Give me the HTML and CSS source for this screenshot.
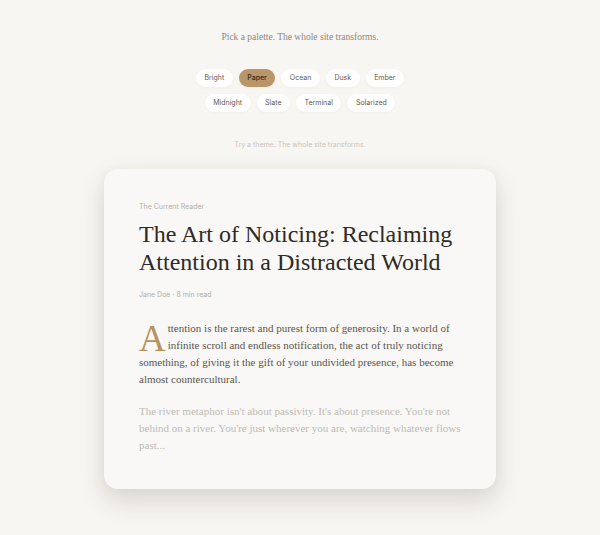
FILE: index.html
```html
<!DOCTYPE html>
<html lang="en">
<head>
<meta charset="utf-8">
<title>The Current Reader</title>
<link rel="stylesheet" href="styles.css">
</head>
<body>
<main class="page">
  <p class="tagline">Pick a palette. The whole site transforms.</p>
  <div class="pills">
    <div class="pill-row">
      <button class="pill">Bright</button>
      <button class="pill active">Paper</button>
      <button class="pill">Ocean</button>
      <button class="pill">Dusk</button>
      <button class="pill">Ember</button>
    </div>
    <div class="pill-row">
      <button class="pill">Midnight</button>
      <button class="pill">Slate</button>
      <button class="pill">Terminal</button>
      <button class="pill">Solarized</button>
    </div>
  </div>
  <p class="hint">Try a theme. The whole site transforms.</p>
  <article class="card">
    <div class="kicker">The Current Reader</div>
    <h1 class="title">The Art of Noticing: Reclaiming Attention in a Distracted World</h1>
    <div class="meta">Jane Doe · 8 min read</div>
    <p class="lead"><span class="dropcap">A</span>ttention is the rarest and purest form of generosity. In a world of infinite scroll and endless notification, the act of truly noticing something, of giving it the gift of your undivided presence, has become almost countercultural.</p>
    <p class="faded">The river metaphor isn't about passivity. It's about presence. You're not behind on a river. You're just wherever you are, watching whatever flows past...</p>
  </article>
</main>
</body>
</html>
```

FILE: styles.css
```css
html, body {
  margin: 0;
  padding: 0;
  background: #f8f6f2;
}
.page {
  display: flex;
  flex-direction: column;
  align-items: center;
  padding-top: 30px;
  padding-bottom: 40px;
}
.tagline {
  margin: 0;
  font-family: "Liberation Serif", serif;
  font-size: 9.5px;
  line-height: 14px;
  color: #8c8781;
}
.pills {
  margin-top: 25px;
  display: flex;
  flex-direction: column;
  gap: 7px;
  align-items: center;
}
.pill-row {
  display: flex;
  gap: 6px;
}
.pill {
  font-family: Inter, "Liberation Sans", sans-serif;
  font-size: 7px;
  line-height: 18px;
  height: 18px;
  padding: 0 8.5px;
  border: none;
  border-radius: 9px;
  background: #ffffff;
  color: #5f5a54;
  box-shadow: 0 1px 3px rgba(120, 100, 70, 0.05);
}
.pill.active {
  background: #b8966a;
  color: #33291c;
  font-weight: 500;
}
.hint {
  margin: 27px 0 0;
  font-family: Inter, "Liberation Sans", sans-serif;
  font-size: 7px;
  line-height: 12px;
  color: #c9c5bf;
}
.card {
  margin-top: 18px;
  width: 392px;
  box-sizing: border-box;
  padding: 33px 35px 35px;
  background: #f9f8f6;
  border-radius: 14px;
  box-shadow: 0 12px 26px rgba(60, 50, 35, 0.16), 0 0 10px rgba(60, 50, 35, 0.05);
}
.kicker {
  font-family: Inter, "Liberation Sans", sans-serif;
  font-size: 7px;
  line-height: 10px;
  color: #b3aea7;
}
.title {
  margin: 8px 0 0;
  font-family: "Liberation Serif", serif;
  font-weight: 400;
  font-size: 24px;
  line-height: 28px;
  color: #2e2b27;
}
.meta {
  margin-top: 14px;
  font-family: Inter, "Liberation Sans", sans-serif;
  font-size: 7px;
  line-height: 10px;
  color: #b3aea7;
}
.lead, .faded {
  font-family: "Liberation Serif", serif;
  font-size: 11px;
  line-height: 17px;
  margin: 20px 0 0;
  color: #5a554f;
}
.faded {
  margin-top: 15px;
  color: #c0bbb4;
}
.dropcap {
  float: left;
  font-size: 37px;
  line-height: 29px;
  padding-top: 4px;
  margin-right: 2px;
  color: #b8935f;
}
```
